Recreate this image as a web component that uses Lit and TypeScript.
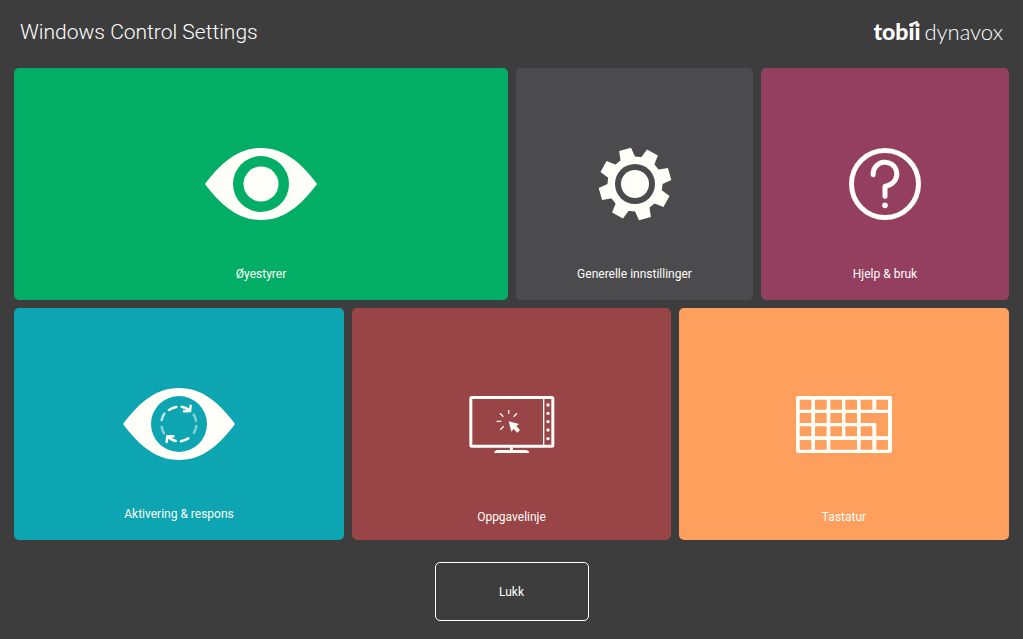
import { LitElement, html, svg, css } from "lit";
import { customElement, property } from "lit/decorators.js";

const eyeOutline =
  "M-56 0 C-41 -20 -24 -36 0 -36 S41 -20 56 0 C41 20 24 36 0 36 S-41 20 -56 0Z";

const gearTeeth = [-106, -61, -16, 29, 74, 119, 164, 209];

const keyHoles = [
  ...[45, 91, 137, 182, 228, 275].map((x) => [x, 41, 35, 30]),
  ...[45, 91, 137, 182].map((x) => [x, 81, 35, 30]),
  ...[45, 91, 137, 182, 228].map((x) => [x, 121, 35, 30]),
  [45, 162, 35, 29],
  [91, 162, 35, 29],
  [137, 162, 80, 29],
  [228, 162, 35, 29],
  [275, 162, 35, 29],
];

const icons = {
  eye: html`<svg width="112" height="72" viewBox="-56 -36 112 72" aria-hidden="true">
    <path class="ink" d=${eyeOutline} />
    <circle class="hole" r="28" />
    <circle class="ink" r="17.5" />
  </svg>`,
  gear: html`<svg width="74" height="74" viewBox="-37 -37 74 74" aria-hidden="true">
    <circle class="ink" r="27.5" />
    ${gearTeeth.map(
      (a) => svg`<path class="ink" d="M24 -7.800 L36 -6.200 V6.200 L24 7.800Z" transform="rotate(${a})" />`
    )}
    <circle class="hole" r="20" />
    <circle class="ink" r="14" />
  </svg>`,
  help: html`<svg width="72" height="72" viewBox="-108 -108 216 216" aria-hidden="true">
    <g class="line">
      <circle r="100.5" stroke-width="15" />
      <path
        d="M-35.5 -28 A35.5 35.5 0 1 1 10 4 L0 7 V37"
        stroke-width="15"
        stroke-linecap="round"
        stroke-linejoin="round"
      />
    </g>
    <circle class="ink" cy="64" r="8.5" />
  </svg>`,
  respond: html`<svg width="112" height="72" viewBox="-56 -36 112 72" aria-hidden="true">
    <path class="ink" d=${eyeOutline} />
    <circle class="hole" r="28" />
    <g transform="scale(0.3333)" class="line" stroke-width="7.5" stroke-linecap="round">
      <path d="M-30 -42 Q-20 -49 -8 -51" />
      <path d="M8 -52 Q20 -50 31 -41 M35 -55 L33 -39 L15 -38" />
      <path d="M28 43 Q18 49 6 52" />
      <path d="M-10 51 Q-22 48 -33 39 M-37 54 L-35 37 L-17 37" />
      <g opacity="0.75">
        <path d="M-52 -12 Q-50 -22 -44 -31" />
      </g>
      <g opacity="0.5">
        <path d="M44 -28 Q50 -20 51 -10" />
        <path d="M52 6 Q50 18 45 26" />
        <path d="M-52 8 Q-50 19 -45 28" />
      </g>
    </g>
  </svg>`,
  taskbar: html`<svg width="86" height="57" viewBox="42 30 258 171" aria-hidden="true">
    <g class="line">
      <rect x="47.500" y="34.500" width="246" height="146" rx="3" stroke-width="9" />
      <path d="M266 35 V180" stroke-width="4" />
      <path
        d="M161 72 V83 M135 82 L145 92 M186 82 L176 92 M125 106 H139 M136 131 L146 121"
        stroke-width="4"
      />
    </g>
    ${[57, 82, 107, 132, 158].map((y) => svg`<circle class="ink" cx="279" cy=${y} r="5" />`)}
    <path
      class="ink"
      d="M161 106 L192 114 L184 121 L195 132 L187 140 L176 129 L169 137Z M165 184 H174 V192 H214 Q222 193 223 201 H117 Q118 193 126 192 H165Z"
    />
  </svg>`,
  keyboard: html`<svg width="96" height="57" viewBox="34 30 288 171" aria-hidden="true">
    <rect class="ink" x="34" y="30" width="288" height="171" rx="6" />
    ${keyHoles.map(
      ([x, y, w, h]) => svg`<rect class="hole" x=${x} y=${y} width=${w} height=${h} rx="2" />`
    )}
    <path class="hole" d="M230 81 H310 V151 H275 V111 H228 V83Z" />
  </svg>`,
};

type IconName = keyof typeof icons;

@customElement("settings-tile")
export class SettingsTile extends LitElement {
  @property() icon: IconName = "eye";
  @property() label = "";

  static styles = css`
    :host {
      display: grid;
      min-width: 0;
    }
    .tile {
      display: grid;
      grid-template-rows: 1fr auto 1fr;
      justify-items: center;
      padding: 0;
      border: 0;
      border-radius: 5px;
      background: var(--tile);
      color: #fffef9;
      font: 12px/18px Roboto, "Noto Sans", sans-serif;
      cursor: pointer;
    }
    .tile:focus-visible {
      outline: 2px solid #fff;
    }
    svg {
      display: block;
      grid-row: 2;
    }
    .label {
      grid-row: 3;
      align-self: end;
      padding-bottom: var(--label-space, 17px);
    }
    .ink {
      fill: #fffef9;
    }
    .hole {
      fill: var(--tile);
    }
    .line {
      fill: none;
      stroke: #fffef9;
    }
  `;

  render() {
    return html`<button class="tile" type="button">
      ${icons[this.icon]}
      <span class="label">${this.label}</span>
    </button>`;
  }
}

@customElement("app-root")
export class AppRoot extends LitElement {
  static styles = css`
    :host {
      display: flex;
      flex-direction: column;
      box-sizing: border-box;
      min-height: 100vh;
      padding: 0 14px;
      background: #3d3d3d;
      color: #fff;
      font-family: Roboto, "Noto Sans", sans-serif;
    }
    header {
      display: flex;
      justify-content: space-between;
      align-items: center;
      height: 64px;
      padding: 0 6px;
      margin-bottom: 4px;
    }
    h1 {
      margin: 0;
      font-size: 21px;
      line-height: 28px;
      font-weight: 300;
    }
    .logo {
      display: flex;
      align-items: baseline;
      gap: 4px;
      font-family: Lato, sans-serif;
      font-size: 22px;
      line-height: 28px;
      padding-bottom: 2px;
    }
    .tobii {
      position: relative;
      font-size: 23px;
      font-weight: 900;
    }
    .link {
      position: absolute;
      top: 2px;
      right: 0;
    }
    .dynavox {
      font-weight: 300;
    }
    main {
      flex: 1;
      display: grid;
      grid-template-rows: 1fr 1fr;
      gap: 8px;
    }
    .row {
      display: grid;
      gap: 8px;
    }
    .first {
      grid-template-columns: 494fr 237fr 248fr;
    }
    .second {
      grid-template-columns: 330fr 319fr 330fr;
    }
    .green {
      --tile: #02ad66;
    }
    .grey {
      --tile: #4b4b4d;
    }
    .plum {
      --tile: #943e60;
    }
    .teal {
      --tile: #0ea5b2;
    }
    .red {
      --tile: #994447;
    }
    .orange {
      --tile: #ff9f5e;
    }
    .low {
      --label-space: 14px;
    }
    footer {
      display: flex;
      justify-content: center;
      padding: 22px 0 18px;
    }
    .close {
      width: 154px;
      height: 59px;
      border: 1px solid #fff;
      border-radius: 5px;
      background: transparent;
      color: #fff;
      font: 12px/18px Roboto, "Noto Sans", sans-serif;
      cursor: pointer;
    }
  `;

  render() {
    return html`
      <header>
        <h1>Windows Control Settings</h1>
        <div class="logo">
          <span class="tobii">tobii<svg class="link" width="13" height="8" viewBox="0 0 13 8" aria-hidden="true">
              <path d="M3 6 L10 3" stroke="#fff" stroke-width="2" stroke-linecap="round" />
            </svg></span>
          <span class="dynavox">dynavox</span>
        </div>
      </header>
      <main>
        <div class="row first">
          <settings-tile class="green" icon="eye" label="Øyestyrer"></settings-tile>
          <settings-tile class="grey" icon="gear" label="Generelle innstillinger"></settings-tile>
          <settings-tile class="plum" icon="help" label="Hjelp &amp; bruk"></settings-tile>
        </div>
        <div class="row second">
          <settings-tile class="teal" icon="respond" label="Aktivering &amp; respons"></settings-tile>
          <settings-tile class="red low" icon="taskbar" label="Oppgavelinje"></settings-tile>
          <settings-tile class="orange low" icon="keyboard" label="Tastatur"></settings-tile>
        </div>
      </main>
      <footer>
        <button class="close" type="button">Lukk</button>
      </footer>
    `;
  }
}
